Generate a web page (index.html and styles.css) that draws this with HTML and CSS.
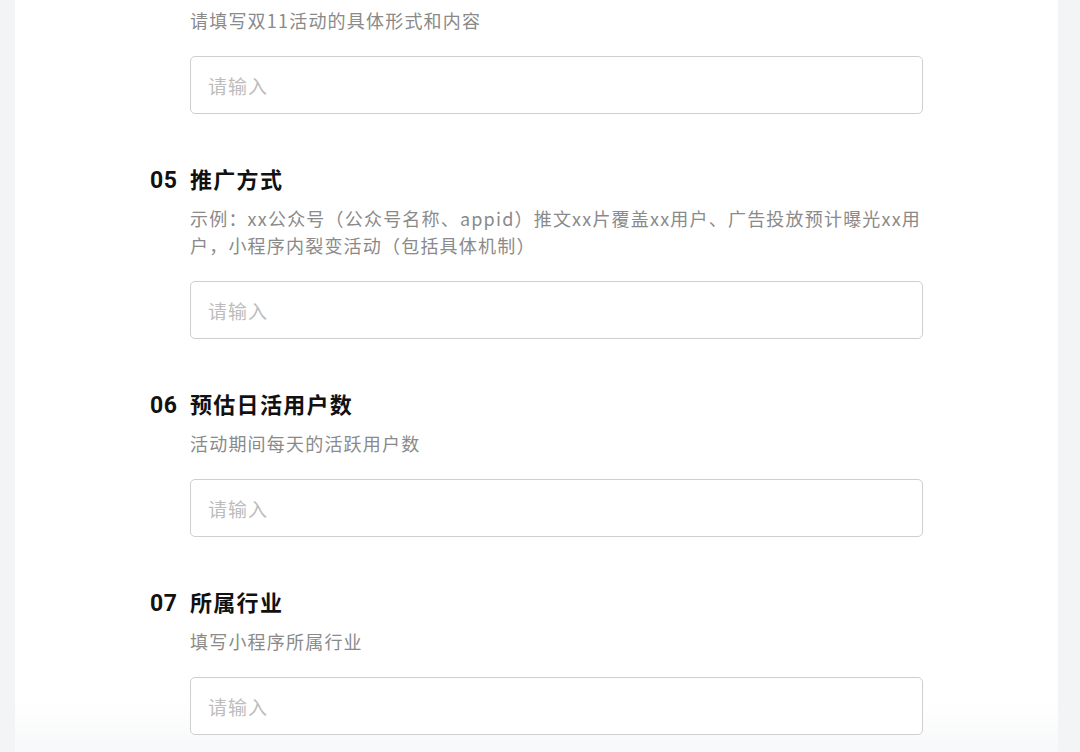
FILE: index.html
```html
<!DOCTYPE html>
<html lang="zh-CN">
<head>
  <meta charset="UTF-8">
  <title>活动报名</title>
  <link rel="stylesheet" href="styles.css">
</head>
<body>

<div class="card">
  <div class="field first">
    <p class="desc">请填写双11活动的具体形式和内容</p>
    <input type="text" placeholder="请输入">
  </div>

  <div class="field">
    <h3><span class="num">05</span>推广方式</h3>
    <p class="desc">示例：xx公众号（公众号名称、appid）推文xx片覆盖xx用户、广告投放预计曝光xx用户，小程序内裂变活动（包括具体机制）</p>
    <input type="text" placeholder="请输入">
  </div>

  <div class="field">
    <h3><span class="num">06</span>预估日活用户数</h3>
    <p class="desc">活动期间每天的活跃用户数</p>
    <input type="text" placeholder="请输入">
  </div>

  <div class="field">
    <h3><span class="num">07</span>所属行业</h3>
    <p class="desc">填写小程序所属行业</p>
    <input type="text" placeholder="请输入">
  </div>
</div>

</body>
</html>
```

FILE: styles.css
```css
body {
  margin: 0;
  background: #f3f4f6;
  font-family: "Noto Sans CJK SC", "Noto Sans", sans-serif;
  height: 752px;
  overflow: hidden;
}

.card {
  margin: 0 22px 0 15px;
  height: 752px;
  background: linear-gradient(to bottom, #fff 700px, #f7f8f9 752px);
  padding: 0 136px 0 135px;
  box-sizing: border-box;
}

.field {
  padding-top: 51px;
}

.field.first {
  padding-top: 7px;
}

h3 {
  margin: 0;
  height: 30px;
  line-height: 26px;
  font-size: 22px;
  font-weight: bold;
  color: #111;
  letter-spacing: 1.3px;
  display: flex;
  align-items: baseline;
}

.num {
  font-family: "Roboto", sans-serif;
  font-weight: bold;
  font-size: 23px;
  width: 40px;
  letter-spacing: 0.5px;
}

.desc {
  margin: 10px 0 0 40px;
  font-size: 18px;
  line-height: 27px;
  letter-spacing: 1.2px;
  color: #8a8a8a;
}

.first .desc {
  margin-top: 0;
}

input {
  display: block;
  margin: 22px 0 0 40px;
  width: 733px;
  height: 58px;
  box-sizing: border-box;
  border: 1px solid #cfcfcf;
  border-radius: 5px;
  padding: 0 17px;
  font-family: "Noto Sans CJK SC", sans-serif;
  font-size: 19px;
  letter-spacing: 1px;
  color: #333;
  background: #fff;
  outline: none;
}

input::placeholder {
  color: #bcbcbc;
}
```
